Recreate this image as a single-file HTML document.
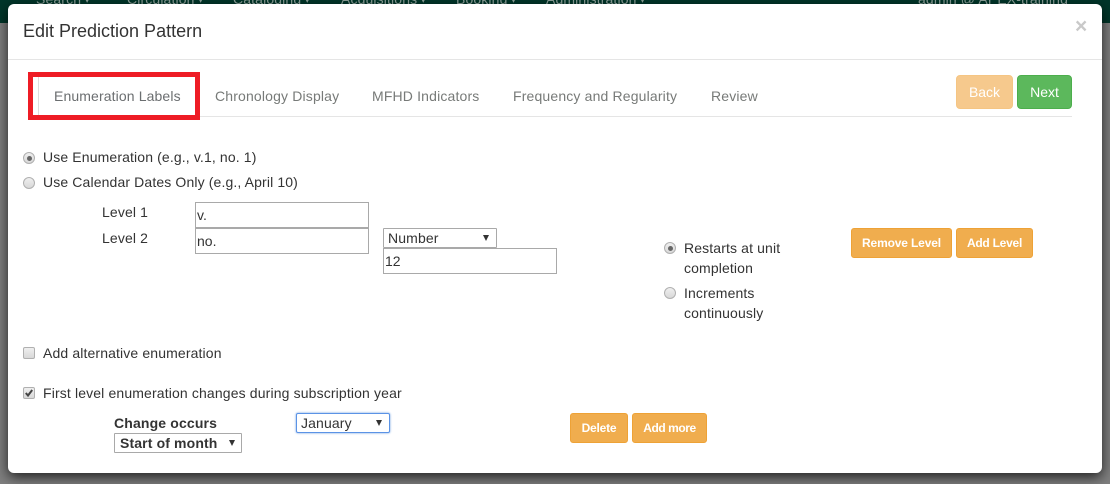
<!DOCTYPE html>
<html><head><meta charset="utf-8"><style>
html,body{margin:0;padding:0}
body{width:1110px;height:484px;overflow:hidden;position:relative;background:#7f7f7f;font-family:"Liberation Sans",sans-serif;font-size:14px;color:#333;letter-spacing:.13px}
.a{position:absolute;white-space:nowrap;line-height:20px}
.nav{position:absolute;left:0;top:0;width:1110px;height:23px;background:#00362a}
.nav span{position:absolute;top:-11px;font-size:14px;line-height:20px;color:#8fa39c;white-space:nowrap}
.nav b{font-weight:normal;font-size:8px;vertical-align:1px}
.modal{position:absolute;left:8px;top:4px;width:1094px;height:469px;background:#fff;border-radius:6px;box-shadow:0 4px 13px rgba(0,0,0,.75)}
.line{position:absolute;height:1px;background:#e5e5e5}
.tab{color:#777a78;letter-spacing:.16px}
.btn{position:absolute;box-sizing:border-box;border-radius:3px;text-align:center;color:#fff;background:#f0ad4e;border:1px solid #eea236;font-size:12px;font-weight:bold;line-height:28px;height:30px;letter-spacing:-.2px}
.inp{position:absolute;box-sizing:border-box;border:1px solid #a9a9a9;background:#fff;color:#333;font-size:14px;line-height:25px;padding-left:1px;height:26px;white-space:nowrap}
.sel{position:absolute;box-sizing:border-box;border:1px solid #a9a9a9;border-radius:1px;background:#fff;height:20px;line-height:18px;white-space:nowrap;padding-left:4px;font-size:14px}
.sel i{position:absolute;right:7px;top:6px;width:0;height:0;border-left:3px solid transparent;border-right:3px solid transparent;border-top:6px solid #333}
.r{position:absolute;width:12px;height:12px;box-sizing:border-box;border-radius:50%;border:1px solid #b0b0b0;background:linear-gradient(#efefef,#d8d8d8)}
.r.on::after{content:"";position:absolute;left:2.5px;top:2.5px;width:5px;height:5px;border-radius:50%;background:#666}
.c{position:absolute;width:12px;height:12px;box-sizing:border-box;border-radius:2px;border:1px solid #b0b0b0;background:linear-gradient(#efefef,#d8d8d8)}
</style></head><body>
<div class="nav">
<span style="left:36px">Search <b>▾</b></span><span style="left:127px">Circulation <b>▾</b></span><span style="left:233px">Cataloging <b>▾</b></span><span style="left:341px">Acquisitions <b>▾</b></span><span style="left:456px">Booking <b>▾</b></span><span style="left:546px">Administration <b>▾</b></span><span style="left:918px">admin @ APEX-training</span>
</div>
<div class="modal"></div>

<div class="a" style="left:23px;top:21px;font-size:18px;color:#333;letter-spacing:0">Edit Prediction Pattern</div>
<div class="a" style="left:1075px;top:17px;font-size:21px;font-weight:bold;color:#c9c9c9">×</div>
<div class="line" style="left:8px;top:59px;width:1094px"></div>

<div class="line" style="left:38px;top:116px;width:1034px"></div>
<div style="position:absolute;left:28px;top:72px;width:162px;height:38px;border:5px solid #ee1c25;background:#fff"></div>
<div style="position:absolute;left:38px;top:77px;width:1px;height:38px;background:#ddd"></div>
<div class="a tab" style="left:54px;top:86px;color:#6b6e70;letter-spacing:.12px">Enumeration Labels</div>
<div class="a tab" style="left:215px;top:86px">Chronology Display</div>
<div class="a tab" style="left:372px;top:86px">MFHD Indicators</div>
<div class="a tab" style="left:513px;top:86px">Frequency and Regularity</div>
<div class="a tab" style="left:711px;top:86px">Review</div>

<div style="position:absolute;box-sizing:border-box;left:956px;top:75px;width:57px;height:34px;border-radius:4px;background:#f6c98d;border:1px solid #f5c583;color:#fff;text-align:center;line-height:32px;letter-spacing:0">Back</div>
<div style="position:absolute;box-sizing:border-box;left:1017px;top:75px;width:55px;height:34px;border-radius:4px;background:#5cb85c;border:1px solid #4cae4c;color:#fff;text-align:center;line-height:32px;letter-spacing:0">Next</div>

<div class="r on" style="left:23px;top:152px"></div>
<div class="a" style="left:43px;top:147px">Use Enumeration (e.g., v.1, no. 1)</div>
<div class="r" style="left:23px;top:177px"></div>
<div class="a" style="left:43px;top:172px">Use Calendar Dates Only (e.g., April 10)</div>

<div class="a" style="left:102px;top:202px">Level 1</div>
<div class="a" style="left:102px;top:228px">Level 2</div>
<div class="inp" style="left:195px;top:202px;width:174px;letter-spacing:0">v.</div>
<div class="inp" style="left:195px;top:228px;width:174px;letter-spacing:0">no.</div>
<div class="sel" style="left:383px;top:228px;width:114px">Number<i></i></div>
<div class="inp" style="left:383px;top:248px;width:174px;letter-spacing:0">12</div>

<div class="r on" style="left:664px;top:242px"></div>
<div class="a" style="left:684px;top:238px">Restarts at unit</div>
<div class="a" style="left:684px;top:258px">completion</div>
<div class="r" style="left:664px;top:287px"></div>
<div class="a" style="left:684px;top:283px">Increments</div>
<div class="a" style="left:684px;top:303px">continuously</div>

<div class="btn" style="left:851px;top:228px;width:101px;letter-spacing:-.15px">Remove Level</div>
<div class="btn" style="left:956px;top:228px;width:77px;letter-spacing:-.25px">Add Level</div>

<div class="c" style="left:23px;top:347px"></div>
<div class="a" style="left:43px;top:343px">Add alternative enumeration</div>
<div class="c" style="left:23px;top:387px"></div>
<svg style="position:absolute;left:23px;top:387px" width="12" height="12" viewBox="0 0 12 12"><path d="M2.8 6 L5 8.5 L9.2 3" fill="none" stroke="#444" stroke-width="2"/></svg>
<div class="a" style="left:43px;top:383px;letter-spacing:.14px">First level enumeration changes during subscription year</div>

<div class="a" style="left:114px;top:413px;font-weight:bold;letter-spacing:.15px">Change occurs</div>
<div class="sel" style="left:114px;top:433px;width:128px;font-weight:bold;padding-left:5px">Start of month<i style="right:6px"></i></div>
<div class="sel" style="left:296px;top:413px;width:94px;border:1px solid #5b93e6;border-radius:2px;box-shadow:0 0 2px #6a9be0">January<i></i></div>

<div class="btn" style="left:570px;top:413px;width:58px">Delete</div>
<div class="btn" style="left:632px;top:413px;width:75px;letter-spacing:-.45px">Add more</div>
</body></html>
